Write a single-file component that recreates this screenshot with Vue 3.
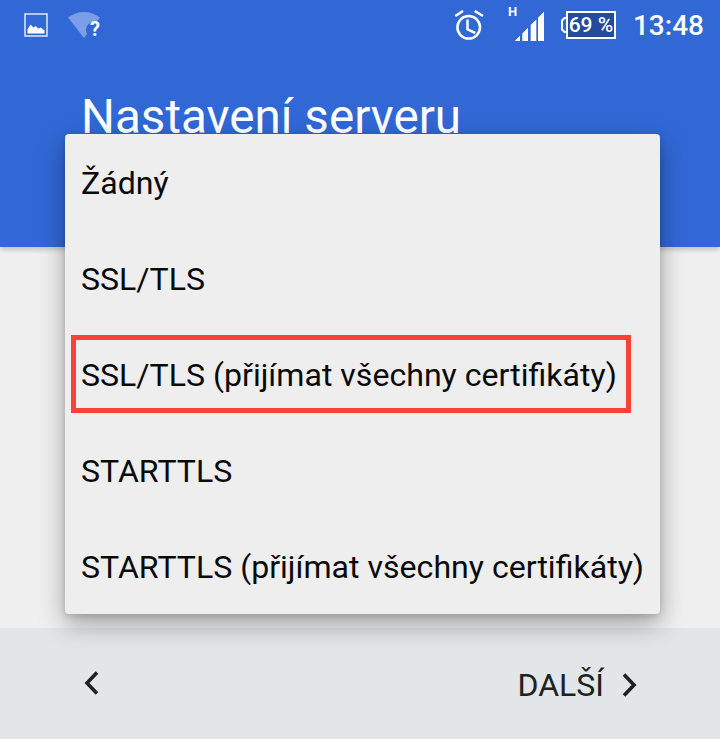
<template>
  <div class="screen">
    <header class="appbar">
      <div class="status">
        <div class="status-left">
          <svg width="24" height="24" viewBox="0 0 24 24">
            <rect x="1" y="1" width="22" height="22" fill="none" stroke="#dfe8fa" stroke-width="1.500" />
            <path d="M3.500 20.500v-4l3-5 3 3 2.500-1.500 2 2.500 3-1 2 2 1.500.5v3.500z" fill="#fff" />
          </svg>
          <svg width="32" height="26" viewBox="0 0 32 26">
            <path d="M0 5.500C5 2 10 0 16 0s11 2 16 5.500L16 26z" fill="#7c9ee8" />
            <circle cx="26" cy="18" r="8" fill="#3168d6" />
          </svg>
          <span class="wifi-q">?</span>
        </div>
        <div class="status-right">
          <svg width="30" height="30" viewBox="0 0 30 30" fill="none" stroke="#fff" stroke-width="2.500">
            <circle cx="14.700" cy="17.300" r="11.300" />
            <path d="M13.500 9.500V19.300L21.300 23" />
            <path d="M1.300 6 9 1M20.700 1 29 6" />
          </svg>
          <div class="signal">
            <span class="net">H</span>
            <svg width="30" height="30" viewBox="0 0 30 30" fill="#fff">
              <path d="M.7 30 6 24.700V30z" />
              <path d="M8.300 30V22.400L14 16.700V30z" />
              <path d="M16.700 30V14L22.300 8.400V30z" />
              <path d="M24 30V6.700L30 .7V30z" />
            </svg>
          </div>
          <div class="battery">
            <svg width="5" height="16" viewBox="0 0 5 16" fill="none" stroke="#fff" stroke-width="2">
              <path d="M5 1H3.500L1 3.500v9L3.500 15H5" />
            </svg>
            <span class="cell">69 %</span>
          </div>
          <span class="clock">13:48</span>
        </div>
      </div>
      <h1 class="title">Nastavení serveru</h1>
    </header>
    <main class="body"></main>
    <footer class="footer">
      <button class="nav">
        <svg width="16" height="24" viewBox="0 0 16 24" fill="none" stroke="#212121" stroke-width="3.600">
          <path d="M13 1.500 3 12l10 10.500" />
        </svg>
      </button>
      <button class="nav">
        <span class="next">DALŠÍ</span>
        <svg width="16" height="24" viewBox="0 0 16 24" fill="none" stroke="#212121" stroke-width="3.600">
          <path d="M3 1.500 13 12 3 22.500" />
        </svg>
      </button>
    </footer>
    <ul class="menu">
      <li v-for="item in items" :key="item" class="item">{{ item }}</li>
    </ul>
    <div class="highlight"></div>
  </div>
</template>

<script setup>
const items = [
  'Žádný',
  'SSL/TLS',
  'SSL/TLS (přijímat všechny certifikáty)',
  'STARTTLS',
  'STARTTLS (přijímat všechny certifikáty)',
]
</script>

<style>
html, body { margin: 0; background: #f0f0f0; }
</style>

<style scoped>
.screen {
  position: relative;
  width: 720px;
  height: 739px;
  overflow: hidden;
  display: flex;
  flex-direction: column;
  font-family: Roboto, "Liberation Sans", sans-serif;
  background: #f0f0f0;
}
.appbar {
  height: 247px;
  flex: none;
  background: #3168d6;
  color: #fff;
  box-shadow: 0 3px 5px rgba(0, 0, 0, 0.18);
  position: relative;
  z-index: 1;
}
.status {
  height: 50px;
  display: flex;
  justify-content: space-between;
  align-items: center;
  padding: 0 16px 0 24px;
}
.status-left {
  position: relative;
  display: flex;
  align-items: center;
  gap: 20px;
}
.status svg { display: block; }
.wifi-q {
  position: absolute;
  left: 66px;
  top: 6px;
  font-size: 20px;
  font-weight: 700;
  line-height: 22px;
  color: #fff;
}
.status-right {
  display: flex;
  align-items: center;
}
.signal {
  position: relative;
  width: 30px;
  height: 30px;
  margin-left: 30px;
  margin-top: 2px;
}
.net {
  position: absolute;
  left: -6px;
  top: -7px;
  font-size: 13px;
  font-weight: 700;
  line-height: 15px;
}
.battery {
  display: flex;
  align-items: center;
  margin-left: 17px;
}
.cell {
  width: 46px;
  height: 24px;
  border: 2px solid #fff;
  background: #244a9b;
  font-size: 21px;
  font-weight: 500;
  line-height: 25px;
  text-align: center;
  white-space: nowrap;
  overflow: hidden;
}
.clock {
  margin-left: 17px;
  font-size: 28px;
  font-weight: 500;
  line-height: 32px;
  margin-top: 2px;
}
.title {
  margin: 41px 0 0 81px;
  font-size: 47.600px;
  font-weight: 400;
  line-height: 52px;
  white-space: nowrap;
}
.body { flex: 1; }
.footer {
  height: 111px;
  flex: none;
  background: #e2e6e9;
  display: flex;
  justify-content: space-between;
  align-items: flex-start;
  padding: 43px 83px 0 84px;
  box-sizing: border-box;
}
.nav {
  display: flex;
  align-items: center;
  gap: 17px;
  border: 0;
  padding: 0;
  background: none;
  font: inherit;
  color: #212121;
}
.next {
  font-size: 32px;
  line-height: 28px;
  font-weight: 400;
}
.menu {
  position: absolute;
  z-index: 2;
  left: 65px;
  top: 134px;
  width: 595px;
  margin: 0;
  padding: 0;
  list-style: none;
  background: #eeeeee;
  border-radius: 4px;
  box-shadow: 0 10px 26px rgba(0, 0, 0, 0.34), 0 2px 6px rgba(0, 0, 0, 0.12);
}
.item {
  height: 96px;
  line-height: 98px;
  padding-left: 16px;
  font-size: 32.100px;
  color: #0a0a0a;
  white-space: nowrap;
}
.highlight {
  position: absolute;
  z-index: 3;
  left: 71px;
  top: 335px;
  width: 560px;
  height: 78px;
  box-sizing: border-box;
  border: 5px solid #fb4238;
}
</style>
